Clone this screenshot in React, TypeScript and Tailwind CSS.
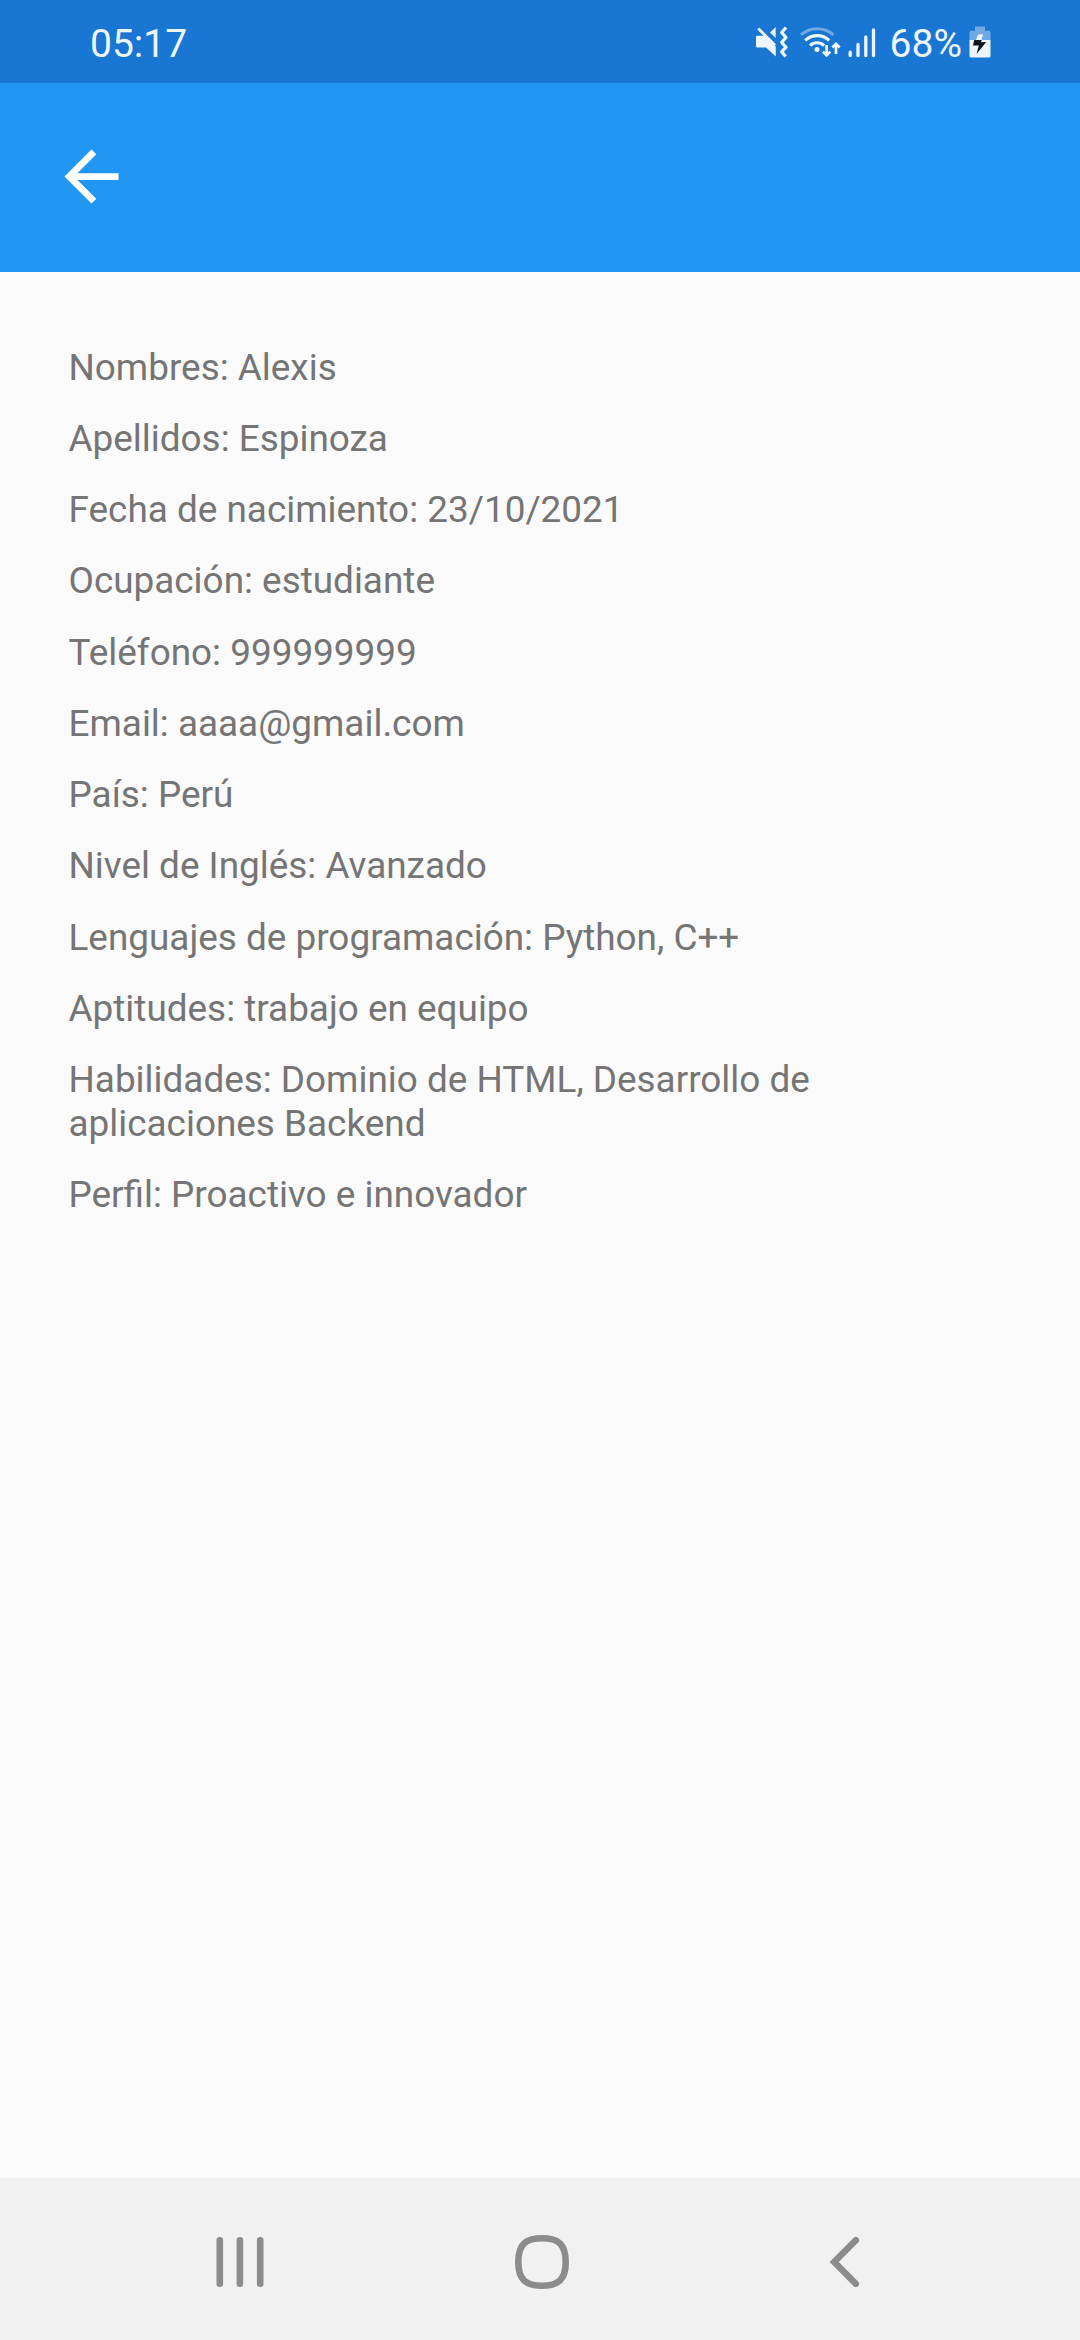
const details = [
  "Nombres: Alexis",
  "Apellidos: Espinoza",
  "Fecha de nacimiento: 23/10/2021",
  "Ocupación: estudiante",
  "Teléfono: 999999999",
  "Email: aaaa@gmail.com",
  "País: Perú",
  "Nivel de Inglés: Avanzado",
  "Lenguajes de programación: Python, C++",
  "Aptitudes: trabajo en equipo",
  "Habilidades: Dominio de HTML, Desarrollo de aplicaciones Backend",
  "Perfil: Proactivo e innovador",
];

function StatusIcons() {
  return (
    <svg width="122" height="34" viewBox="0 0 122 34" fill="none" className="shrink-0">
      {/* Muted speaker with vibration waves */}
      <g fill="#edf5fd">
        <path d="M1 12q0-1.200 1.200-1.200H10L20.800 21.500V31.500L11 22.500H2.200Q1 22.500 1 21.300z" />
        <path d="M20.700 2v11l-5.600-5.600z" />
      </g>
      <path d="M3.200 3.400 20 20.200" stroke="#edf5fd" strokeWidth="2.800" />
      <path d="m31 2.500-4.300 5 4.300 5-4.300 4.900 4.300 4.800-4.300 4.700 4 4.600" stroke="#edf5fd" strokeWidth="3.200" strokeLinejoin="round" />
      {/* Wi-Fi arcs and transfer arrows */}
      <path d="M46 9.900a24.500 24.500 0 0 1 32.400 0" stroke="#70a9e4" strokeWidth="3" />
      <path d="M50.200 15.300a17.500 17.500 0 0 1 24 0M55.100 20.600a10 10 0 0 1 14 0" stroke="#edf5fd" strokeWidth="3.200" />
      <circle cx="62" cy="24.500" r="2.500" fill="#edf5fd" />
      <path d="M71.600 20v10.300M67.900 26.600l3.700 3.700 3.700-3.700M81 29V18.800M77.300 22.500l3.700-3.700 3.700 3.700" stroke="#edf5fd" strokeWidth="2.700" />
      {/* Cellular bars */}
      <path d="M95.200 27.200v3.400M103 19.400v11.200M110.800 11.800v18.800M118.500 4.800v25.800" stroke="#edf5fd" strokeWidth="3.300" strokeLinecap="round" />
    </svg>
  );
}

function StatusBar() {
  return (
    <header className="flex h-[83px] shrink-0 items-start justify-between bg-[#1976d2] pl-[90px] pr-[89px] pt-[20px] text-[39px] leading-[48px] text-[#edf5fd]">
      <span>05:17</span>
      <div className="flex">
        <div className="mr-[13px] mt-[5px]">
          <StatusIcons />
        </div>
        <span className="mr-[7px]">68%</span>
        <svg width="22" height="32" viewBox="0 0 22 32" className="mt-[6px] shrink-0">
          <path d="M6 .6h10v4.100h4q1.500 0 1.500 1.500V14H.5V6.200Q.5 4.700 2 4.700h4z" fill="#70a9e4" />
          <path d="M.5 14h21v16q0 1.500-1.500 1.500H2Q.5 31.500.5 30z" fill="#edf5fd" />
          <path d="m9 8.500 5-.2L12.500 14H7z" fill="#edf5fd" />
          <path d="M5.200 14h7.600l-.8 2.200 5.200-.3L7.500 28l2.300-8.500H4z" fill="#10151c" />
        </svg>
      </div>
    </header>
  );
}

function AppBar() {
  return (
    <div className="flex h-[189px] shrink-0 items-start bg-[#2196f3] pl-[51px] pt-[53px]">
      <button type="button" aria-label="Atrás">
        <svg width="81" height="81" viewBox="0 0 24 24" fill="white" className="block">
          <path d="M20 11H7.830l5.590-5.590L12 4l-8 8 8 8 1.410-1.410L7.830 13H20v-2z" />
        </svg>
      </button>
    </div>
  );
}

function NavBar() {
  return (
    <nav className="grid h-[162px] shrink-0 grid-cols-[302px_302px_302px] items-start bg-[#f1f1f1] pl-[89px] pt-[53px]">
      <button type="button" aria-label="Recientes" className="flex justify-center">
        <svg width="60" height="60" viewBox="0 0 60 60" fill="none" stroke="#8c8c8c" strokeWidth="6.600" strokeLinecap="round">
          <path d="M9.800 9.300v43.400M29.900 9.300v43.400M50.200 9.300v43.400" />
        </svg>
      </button>
      <button type="button" aria-label="Inicio" className="flex justify-center">
        <svg width="60" height="60" viewBox="0 0 60 60" fill="none" stroke="#8c8c8c" strokeWidth="6.600">
          <path d="M30 7.300C46 7.300 53.700 13 53.700 31S46 54.700 30 54.700 6.300 49 6.300 31 14 7.300 30 7.300Z" />
        </svg>
      </button>
      <button type="button" aria-label="Volver" className="flex justify-center">
        <svg width="60" height="60" viewBox="0 0 60 60" fill="none" stroke="#8c8c8c" strokeWidth="6.600" strokeLinecap="round">
          <path d="M41.800 9.200 20.200 31l21.600 21.800" />
        </svg>
      </button>
    </nav>
  );
}

export default function App() {
  return (
    <div className="flex h-[2340px] w-[1080px] flex-col overflow-hidden bg-[#fafafa] font-['Roboto',sans-serif]">
      <StatusBar />
      <AppBar />
      <main className="flex grow flex-col gap-[27.25px] px-[68.5px] pt-[73.7px] text-[36.9px] leading-[44px] text-[#757575]">
        {details.map((line) => (
          <p key={line} className="max-w-[800px]">{line}</p>
        ))}
      </main>
      <NavBar />
    </div>
  );
}
